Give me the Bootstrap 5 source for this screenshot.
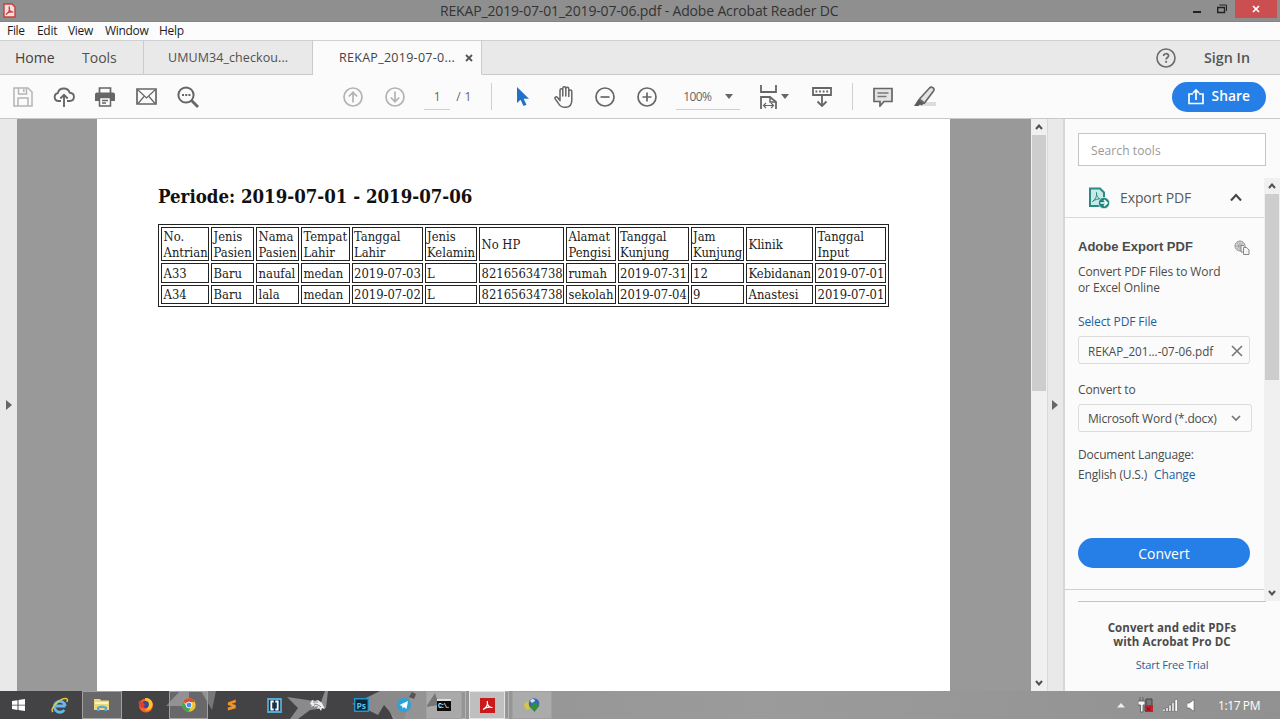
<!DOCTYPE html>
<html lang="en">
<head>
<meta charset="utf-8">
<meta name="viewport" content="width=device-width, initial-scale=1">
<title>REKAP_2019-07-01_2019-07-06.pdf - Adobe Acrobat Reader DC</title>
<link href="https://cdn.jsdelivr.net/npm/bootstrap@5.3.0/dist/css/bootstrap.min.css" rel="stylesheet">
<style>
body{font-family:"Open Sans","Noto Sans",sans-serif;font-size:12px;line-height:16px;color:#4b4b4b;background:#fbfbfb;width:1280px;height:719px;overflow:hidden}
svg{display:block;flex:none}
.titlebar{height:22px;background:#8f8f8f;color:#333;border-bottom:1px solid #858585}
.titlebar>*{flex:none}
.titlebar .app-icon{margin-left:3px;width:13px}
.titlebar .caption{margin-left:424px;width:402px;font-size:14px;letter-spacing:-.16px;white-space:nowrap}
.titlebar .ctl-min{margin-left:351px}
.titlebar .ctl-max{margin-left:16px;margin-bottom:3px}
.titlebar .ctl-close{margin-left:8px;width:42px;height:18px;background:#cb4f50;align-self:flex-start}
.menubar{height:19px;border-bottom:1px solid #d0d0d0;color:#1c1c1c;padding-left:7px;font-size:12px;letter-spacing:-.3px;background:#fcfcfc}
.menubar span:nth-child(1){width:30px}.menubar span:nth-child(2){width:31px}.menubar span:nth-child(3){width:37px}.menubar span:nth-child(4){width:54px}
.tabbar{height:34px;background:#e9e9e9;font-size:14px;color:#505050}
.tabbar>div{border-bottom:1px solid #c9c9c9}
.tab-main{width:144px;border-right:1px solid #cbcbcb;padding-left:15px}
.tab-main span:first-child{width:67px;color:#3f3f3f}
.tab-doc{width:169px;border-right:1px solid #cbcbcb;padding:1px 0 0 24px;font-size:12.5px;letter-spacing:.08px;white-space:nowrap}
.tab-doc.current{background:#fbfbfb;border-bottom-color:#fbfbfb!important;padding-left:26px;color:#444;letter-spacing:.28px}
.signin{font-size:14.3px;font-weight:600;color:#555;width:76px;margin-left:28px}
.toolbar{height:44px;border-bottom:1px solid #c9c9c9;background:#fbfbfb;color:#666}
.cell{width:41.25px;display:flex;justify-content:center;flex:none}
.grp-file{margin-left:2px}.grp-page{margin-left:124.5px}.grp-nav{margin-left:10px}
.page-no{width:26px;height:26px;border-bottom:1px solid #d0d0d0;text-align:center;margin-left:9px;line-height:25px}
.page-sum{width:41px;padding-left:6px;letter-spacing:.4px}
.rule{width:1px;height:27px;background:#cfcfcf}
.rule-edit{margin-left:20px}
.zoom-box{width:64px;height:26px;border-bottom:1px solid #d0d0d0;margin-left:9px;padding:1px 7px 0;font-size:12px;letter-spacing:-.6px}
.caret{width:0;height:0;border:4px solid transparent;border-top:5px solid #666;border-bottom:0}
.ic-fit{margin-left:20px}.ic-keys{margin-left:23px}.ic-note{margin-left:20px}.ic-pen{margin-left:21px}
.btn-share{width:94px;height:30px;background:#267fe6;color:#fff;font-size:13.8px;font-weight:600;margin-left:235.5px}
.work{height:572px}
.strip{background:#e9e9e9;width:17px}
.strip.right-strip{border-left:1px solid #d9d9d9;border-right:2px solid #d6d6d6;width:18px;padding-right:2px}
.canvas-area{background:#999;width:1014px}
.sheet{margin-left:80px;width:853px;background:#fff;padding:67px 0 0 61px;color:#000;font-family:"DejaVu Serif Condensed","DejaVu Serif",serif;font-stretch:condensed}
.sheet h1{font:inherit;font-weight:700;font-size:18.5px;line-height:22px;margin:0 0 16px;color:#111}
.grid-tbl{table-layout:fixed;width:731px;border:1px solid #222;border-collapse:separate;border-spacing:2px;font-size:12.9px;line-height:16px;color:#222}
.grid-tbl td{border:1px solid #222;padding:1px 0 0 1.500px;height:20px;white-space:nowrap}
.grid-tbl tr:first-child td{height:34px;line-height:15.500px}
.grid-tbl tr:last-child td{height:19px}
.vscroll{width:16px;background:#f0f0f0}
.vscroll .thumb{background:#cdcdcd;width:14px}
.vscroll .arr{height:16px;width:16px;display:flex;align-items:center;justify-content:center}
.side{width:215px}
.search-box{margin:14px 0 12px 13px;width:188px;height:33px;border:1px solid #c6c6c6;background:#fff;color:#999;padding-left:12px;line-height:33px;letter-spacing:.1px}
.side-main{width:199px;height:412px;border-bottom:1px solid #d0d0d0}
.exp-head{height:40px;border-bottom:1px solid #d9d9d9;padding-left:23px;font-size:14px;color:#5a5a5a}
.side-in{padding-left:13px}
.exp-title{margin-top:19px;font:bold 13px/20px "Liberation Sans",Arial,sans-serif;width:172px}
.lnk{color:#1f5f9e}
.field{width:172px;height:28px;border:1px solid #dcdcdc;border-radius:3px;padding:1px 6px 0 9px;margin-top:6px}
.btn-convert{width:172px;height:30px;background:#267fe6;color:#fff;font-size:14px;margin-top:53px}
.promo{margin:0 14px 0 13px;width:188px;text-align:center;border-top:1px solid #c4c4c4;padding-top:19px}
.promo b{font-size:11.5px;line-height:14px;font-weight:700;letter-spacing:.1px}
.exp-name{margin-left:9px;letter-spacing:-.1px;padding-top:1px}
.exp-chev{margin-right:22px}
.exp-copy{letter-spacing:-.12px;margin-top:7px}
.pick{margin-top:18px;letter-spacing:-.1px}
.fname{font-size:11.7px;letter-spacing:0}
.field.wide{width:174px}
.fmt{letter-spacing:-.2px;padding-top:1px}
.lang{margin-top:13px;line-height:20px;letter-spacing:-.17px}
.side-scroll{height:423px}
.trial{display:block;margin-top:8px;font-size:11px;letter-spacing:-.15px}
.taskbar{height:28px;background:linear-gradient(90deg,#949494 0 430px,#9b9b9b 760px,#919191);position:relative}
.taskbar .wallpaper{position:absolute;left:0;top:0}
.slots{position:relative;height:28px}
.slot{width:43px;height:28px;display:flex;align-items:center;justify-content:center;flex:none}
.slot.open{border:1px solid #a0a0a0;background:rgba(255,255,255,.2)}
.slot.stack{width:36px}
.slot.stack.active{background:rgba(255,255,255,.4);border-color:#e4e4e4}
.slot.w37{width:37px}.slot.w39{width:39px}.slot.w40{width:40px}.slot.w42{width:42px}.slot.w44{width:44px}.slot.w45{width:45px}.slot.w46{width:46px}.slot.w47{width:47px}
.pile{width:4px;height:28px;border:1px solid #b4b4b4;border-left:0;margin-right:3px}
.tray{gap:9px}
.clock{color:#fff;font-size:12px;letter-spacing:-.4px;width:62px;margin-left:14px;padding-top:1px}
</style>
</head>
<body class="d-flex flex-column">

<header class="titlebar d-flex align-items-center flex-shrink-0">
  <svg class="app-icon" width="13" height="15" viewBox="0 0 13 15"><path d="M1 1h8l3 3v10H1z" fill="#f3dedd" stroke="#c4403e" stroke-width="1.4"/><path d="M3 11.500c3-2 4-5 3.200-8C5.500 7 7.500 9.300 10.300 9 7.500 8.600 4.500 9.500 3 11.500z" fill="none" stroke="#c4403e" stroke-width="1.200"/></svg>
  <div class="caption">REKAP_2019-07-01_2019-07-06.pdf - Adobe Acrobat Reader DC</div>
  <svg class="ctl-min" width="8" height="10"><path d="M0 6h8" stroke="#222" stroke-width="2"/></svg>
  <svg class="ctl-max" width="10" height="10" viewBox="0 0 10 10" fill="none" stroke="#222"><path d="M.7 3.500h6.800v5H.7z" stroke-width="1.400"/><path d="M2.500 1h7v6"/></svg>
  <div class="ctl-close d-flex align-items-center justify-content-center"><svg width="8" height="8"><path d="M1 1l6 6M7 1L1 7" stroke="#fff" stroke-width="1.700"/></svg></div>
</header>

<nav class="menubar d-flex align-items-center flex-shrink-0"><span>File</span><span>Edit</span><span>View</span><span>Window</span><span>Help</span></nav>

<div class="tabbar d-flex flex-shrink-0">
  <div class="tab-main d-flex align-items-center"><span>Home</span><span>Tools</span></div>
  <div class="tab-doc d-flex align-items-center">UMUM34_checkou...</div>
  <div class="tab-doc current d-flex align-items-center"><span>REKAP_2019-07-0...</span><svg class="ms-auto me-2" width="8" height="8"><path d="M1 1l6 6M7 1L1 7" stroke="#555" stroke-width="1.800"/></svg></div>
  <div class="flex-grow-1 d-flex align-items-center justify-content-end">
    <svg width="20" height="20" viewBox="0 0 20 20"><circle cx="10" cy="10" r="9" fill="none" stroke="#6b6b6b" stroke-width="1.600"/><path d="M7.600 8c0-3 5-3 5-.2 0 1.800-2.500 1.700-2.500 3.700" fill="none" stroke="#6b6b6b" stroke-width="1.700"/><circle cx="10.100" cy="13.800" r="1.100" fill="#6b6b6b"/></svg>
    <span class="signin">Sign In</span>
  </div>
</div>

<div class="toolbar d-flex align-items-center flex-shrink-0">
  <div class="grp-file d-flex align-items-center">
    <span class="cell"><svg width="20" height="20" viewBox="0 0 20 20" fill="none" stroke="#b5b5b5" stroke-width="1.500"><path d="M1 1h14l4 4v14H1zM5.500 1v6h8V1M10.800 2v3M5 19v-8h10v8"/></svg></span>
    <span class="cell"><svg width="22" height="20" viewBox="0 0 22 20" fill="none" stroke="#686868" stroke-width="1.900"><path d="M8 14H5.500a4 4 0 0 1-.7-7.900C5.500 3 8 1.500 10.800 1.500c3 0 5.200 1.700 5.900 4.200 6 .5 5.300 8.300 0 8.300H14"/><path d="M11 20V8M7.300 11.500L11 7.800l3.700 3.700"/></svg></span>
    <span class="cell"><svg width="20" height="20" viewBox="0 0 20 20"><path d="M4.500 6V1h11v5" fill="none" stroke="#666" stroke-width="1.700"/><path d="M2 5.500h16a2 2 0 0 1 2 2V14h-4v-3.500H4V14H0V7.500a2 2 0 0 1 2-2z" fill="#666"/><path d="M4.500 10.500h11V19h-11zM7 13.500h6M7 16h4" fill="none" stroke="#666" stroke-width="1.500"/></svg></span>
    <span class="cell"><svg width="21" height="17" viewBox="0 0 21 17" fill="none" stroke="#666" stroke-width="1.700"><path d="M1 1h19v15H1z"/><path d="M2 2l8.500 8L19 2M2 15.500l6-7M19 15.500l-6-7" stroke-width="1.200"/></svg></span>
    <span class="cell"><svg width="22" height="22" viewBox="0 0 22 22"><circle cx="9" cy="9" r="7.600" fill="none" stroke="#666" stroke-width="2"/><path d="M14.500 14.500l6.500 6.500" stroke="#666" stroke-width="2.800"/><path d="M5 9h8.500" stroke="#666" stroke-width="2" stroke-dasharray="2 1.200"/></svg></span>
  </div>
  <div class="grp-page d-flex align-items-center">
    <span class="cell"><svg width="20" height="20" viewBox="0 0 20 20" fill="none" stroke="#b3b3b3" stroke-width="1.700"><circle cx="10" cy="10" r="9"/><path d="M10 15.500V5.500M5.800 9.500L10 5.300l4.200 4.200"/></svg></span>
    <span class="cell"><svg width="20" height="20" viewBox="0 0 20 20" fill="none" stroke="#b3b3b3" stroke-width="1.700"><circle cx="10" cy="10" r="9"/><path d="M10 4.500v10M5.800 10.500l4.200 4.200 4.200-4.200"/></svg></span>
    <span class="page-no">1</span><span class="page-sum">/ 1</span>
    <span class="rule"></span>
  </div>
  <div class="grp-nav d-flex align-items-center">
    <span class="cell"><svg width="12" height="20" viewBox="0 0 12 20"><path d="M0 0v16l3.500-3.200L6.500 19l3-1.300-2.900-6H12z" fill="#2271c8"/></svg></span>
    <span class="cell"><svg width="21" height="22" viewBox="0 0 21 22" fill="none" stroke="#666" stroke-width="1.500" stroke-linejoin="round" stroke-linecap="round"><path d="M6 11V4.200c0-2 2.800-2 2.800 0V10 2.500c0-2.300 3-2.300 3 0V10 3c0-2.200 3-2.200 3 0v7.500V5.500c0-2 3-2 3 0V14c0 4.500-2.400 7.300-6.600 7.300-3.800 0-5.700-1.600-7-4.300L1 12.600c-.5-1.700 1.500-2.400 2.500-1L6 14.600V11"/></svg></span>
    <span class="cell"><svg width="20" height="20" viewBox="0 0 20 20" fill="none" stroke="#666" stroke-width="1.700"><circle cx="10" cy="10" r="9"/><path d="M5.500 10h9"/></svg></span>
    <span class="cell"><svg width="20" height="20" viewBox="0 0 20 20" fill="none" stroke="#666" stroke-width="1.700"><circle cx="10" cy="10" r="9"/><path d="M5.500 10h9M10 5.500v9"/></svg></span>
  </div>
  <div class="zoom-box d-flex align-items-center justify-content-between"><span>100%</span><span class="caret"></span></div>
  <svg class="ic-fit" width="17" height="24" viewBox="0 0 17 24" fill="none" stroke="#666" stroke-width="1.800"><path d="M1 0v7h15V0M1 24V12h9l6 5v7"/><path d="M10 12v5h6" stroke-width="1.500"/><path d="M3.500 20.500h10M6 18l-2.500 2.500L6 23M11 18l2.500 2.500L11 23" stroke-width="1.200"/></svg>
  <span class="caret ms-1"></span>
  <svg class="ic-keys" width="20" height="20" viewBox="0 0 20 20" fill="none" stroke="#666"><path d="M1 1h18v7H1z" stroke-width="1.800"/><path d="M3.500 4.500H17" stroke-width="2" stroke-dasharray="1.800 1.800"/><path d="M10 9v9.500M5.500 14.500L10 19l4.500-4.500" stroke-width="1.800"/></svg>
  <span class="rule rule-edit"></span>
  <svg class="ic-note" width="20" height="20" viewBox="0 0 20 20"><path d="M1 1.500h18v13h-8L7 19v-4.500H1z" fill="#e3e3e3" stroke="#666" stroke-width="1.700"/><path d="M4.500 6h11M4.500 9.500h9" stroke="#777" stroke-width="1.300"/></svg>
  <svg class="ic-pen" width="22" height="21" viewBox="0 0 22 21"><path d="M8 16h14v4H5z" fill="#dcdcdc"/><path d="M5.500 13L15.500 2c2-2 5.800.3 4 3L10.500 17z" fill="#e2e2e2" stroke="#666" stroke-width="1.600"/><path d="M4.500 13l5.800 4.500-3 2-1.300-1L4.500 20H0z" fill="#5c5c5c"/></svg>
  <button class="btn-share btn rounded-pill border-0 p-0 d-flex align-items-center justify-content-center"><svg class="me-2" width="16" height="16" viewBox="0 0 16 16" fill="none" stroke="#fff" stroke-width="1.700"><path d="M5 5H1v9.500h14V5h-4M8 11V1.500M5 4l3-3 3 3"/></svg>Share</button>
</div>

<main class="work d-flex flex-shrink-0">
  <div class="strip d-flex align-items-center justify-content-center"><svg width="6" height="10"><path d="M0 0l6 5-6 5z" fill="#666"/></svg></div>
  <div class="canvas-area d-flex">
    <article class="sheet">
      <h1>Periode: 2019-07-01 - 2019-07-06</h1>
      <table class="grid-tbl">
        <colgroup><col style="width:48px"><col style="width:43px"><col style="width:43px"><col style="width:48.5px"><col style="width:71px"><col style="width:52.5px"><col style="width:85px"><col style="width:49.5px"><col style="width:71px"><col style="width:53.5px"><col style="width:67px"><col style="width:71px"></colgroup>
        <tr><td>No.<br>Antrian</td><td>Jenis<br>Pasien</td><td>Nama<br>Pasien</td><td>Tempat<br>Lahir</td><td>Tanggal<br>Lahir</td><td>Jenis<br>Kelamin</td><td>No HP</td><td>Alamat<br>Pengisi</td><td>Tanggal<br>Kunjung</td><td>Jam<br>Kunjung</td><td>Klinik</td><td>Tanggal<br>Input</td></tr>
        <tr><td>A33</td><td>Baru</td><td>naufal</td><td>medan</td><td>2019-07-03</td><td>L</td><td>82165634738</td><td>rumah</td><td>2019-07-31</td><td>12</td><td>Kebidanan</td><td>2019-07-01</td></tr>
        <tr><td>A34</td><td>Baru</td><td>lala</td><td>medan</td><td>2019-07-02</td><td>L</td><td>82165634738</td><td>sekolah</td><td>2019-07-04</td><td>9</td><td>Anastesi</td><td>2019-07-01</td></tr>
      </table>
    </article>
  </div>
  <div class="vscroll d-flex flex-column align-items-center">
    <span class="arr"><svg width="8" height="6"><path d="M1 5l3-3.500L7 5" fill="none" stroke="#505050" stroke-width="2"/></svg></span>
    <span class="thumb" style="height:256px"></span>
    <span class="arr mt-auto"><svg width="8" height="6"><path d="M1 1l3 3.500L7 1" fill="none" stroke="#505050" stroke-width="2"/></svg></span>
  </div>
  <div class="strip right-strip d-flex align-items-center justify-content-center"><svg width="6" height="10"><path d="M0 0l6 5-6 5z" fill="#666"/></svg></div>

  <aside class="side">
    <div class="search-box">Search tools</div>
    <div class="d-flex">
      <section class="side-main">
        <div class="exp-head d-flex align-items-center">
          <svg width="23" height="22" viewBox="0 0 23 22"><path d="M2 1.500h10l4 4V19H2z" fill="#c6eae6" stroke="#2b8a83" stroke-width="2"/><path d="M4.500 14.500c3-2 4.500-5 4-9 0 4 2 7 5.500 6.500-4-.5-7 .5-9.500 2.500z" fill="none" stroke="#2b8a83"/><circle cx="16" cy="16" r="5.600" fill="#1f857c" stroke="#d4efec" stroke-width=".8"/><path d="M12.500 16h6M16 13l3 3-3 3" fill="none" stroke="#fff" stroke-width="1.700"/></svg>
          <span class="exp-name">Export PDF</span>
          <svg class="ms-auto exp-chev" width="12" height="9"><path d="M1 7.500l5-5.500 5 5.500" fill="none" stroke="#444" stroke-width="2"/></svg>
        </div>
        <div class="side-in">
          <div class="exp-title d-flex align-items-center justify-content-between"><span>Adobe Export PDF</span><svg width="16" height="15" viewBox="0 0 16 15"><circle cx="6" cy="6" r="5" fill="#d8d8d8" stroke="#999"/><path d="M1 6h10M6 1v10M3 2.500c2 2 2 5 0 7M9 2.500c-2 2-2 5 0 7" fill="none" stroke="#999" stroke-width=".8"/><path d="M7 5.500h3l2 2V12H7z" fill="#f4f4f4" stroke="#888"/><path d="M9.500 7.500h3.200L15 10v4.500H9.500z" fill="#f4f4f4" stroke="#888"/></svg></div>
          <div class="exp-copy">Convert PDF Files to Word<br>or Excel Online</div>
          <div class="lnk pick">Select PDF File</div>
          <div class="field d-flex align-items-center justify-content-between"><span class="fname">REKAP_201...-07-06.pdf</span><svg width="12" height="12"><path d="M1 1l10 10M11 1L1 11" stroke="#777" stroke-width="1.600"/></svg></div>
          <div class="pick">Convert to</div>
          <div class="field wide d-flex align-items-center justify-content-between"><span class="fmt">Microsoft Word (*.docx)</span><svg class="me-1" width="10" height="7"><path d="M1 1l4 4 4-4" fill="none" stroke="#777" stroke-width="1.700"/></svg></div>
          <div class="lang">Document Language:<br>English (U.S.) <span class="lnk ms-1">Change</span></div>
          <button class="btn-convert btn rounded-pill border-0 p-0 d-block">Convert</button>
        </div>
      </section>
      <div class="vscroll side-scroll d-flex flex-column align-items-center">
        <span class="arr"><svg width="8" height="6"><path d="M1 5l3-3.500L7 5" fill="none" stroke="#505050" stroke-width="2"/></svg></span>
        <span class="thumb" style="height:186px"></span>
        <span class="arr mt-auto"><svg width="8" height="6"><path d="M1 1l3 3.500L7 1" fill="none" stroke="#505050" stroke-width="2"/></svg></span>
      </div>
    </div>
    <div class="promo"><b class="d-block">Convert and edit PDFs<br>with Acrobat Pro DC</b><span class="lnk trial">Start Free Trial</span></div>
  </aside>
</main>

<footer class="taskbar flex-shrink-0">
  <svg class="wallpaper" width="560" height="28">
    <path d="M0 0H410L398 8 387 14 393 28H0z" fill="#434346"/>
    <path d="M166 15L180 0h9v15zM201 0h15l-4 19z" fill="#77777a"/>
    <path d="M287 6l34 5 4-11 3 0-2 17-16 2-12 9h-8l8-11zM352 13l18-8 10-5h32l-8 28h-8l-12-14-6 10-12-6z" fill="#8a8a8a"/>
    <path d="M412 1l4 2-2 5-5-2zM435 2l4 12-13 2z" fill="#545456"/>
  </svg>
  <div class="slots d-flex align-items-center">
    <span class="slot w37"><svg width="13" height="12"><path d="M0 2l5.500-.8v4.500H0zM6.500 1L13 0v5.700H6.500zM0 6.500h5.500v4.400L0 10zM6.500 6.500H13V12l-6.500-1z" fill="#fff"/></svg></span>
    <span class="slot w45"><svg width="18" height="17" viewBox="0 0 18 17"><path d="M14.500 9H5M14.300 9a5.500 5.500 0 1 0-1 4" fill="none" stroke="#64b8ea" stroke-width="2.800"/><path d="M2 15C-2 12 9 1 15 1.500c2 .3 1.500 2 .8 3.500" fill="none" stroke="#e8c640" stroke-width="1.500"/></svg></span>
    <span class="slot open w40"><svg width="16" height="14" viewBox="0 0 16 14"><path d="M0 1h6l1 1.500h8V12H0z" fill="#ecd77c"/><path d="M1 4h13v2H1z" fill="#fff2b8"/><path d="M3 13V9q5-3 10 0v4h-2.500v-3h-5v3z" fill="#5ba9d3"/></svg></span>
    <span class="slot w47"><svg width="16" height="16" viewBox="0 0 16 16"><circle cx="8" cy="8.500" r="7" fill="#f0642a"/><path d="M7 1c6-1 9 5 7 9s-6 4-7 3c4-1 4-5 1-7z" fill="#fbc52d"/><circle cx="7.500" cy="7.500" r="3.400" fill="#38479c"/><path d="M1 4c2 0 5 2 6 4l-3 3C1 10 0 7 1 4z" fill="#e33e2d"/></svg></span>
    <span class="slot open w39"><svg width="14" height="14" viewBox="0 0 14 14"><circle cx="7" cy="7" r="6.700" fill="#f2c530"/><path d="M7 7L1 3.800A6.700 6.700 0 0 1 13 4H7z" fill="#dd4b3e"/><path d="M1 3.800A6.700 6.700 0 0 0 6.500 13.700L9 9 5 9z" fill="#3ea55b"/><circle cx="7" cy="7" r="2.900" fill="#4a8af0" stroke="#fff" stroke-width=".9"/></svg></span>
    <span class="slot w47"><svg width="10" height="12" viewBox="0 0 12 13"><path d="M1 3.500L10.500 0v3.500L5.500 5l5 1.500v4L1 13V9.500l5-1.500-5-1.500z" fill="#f0932b"/></svg></span>
    <span class="slot w39"><svg width="15" height="15" viewBox="0 0 15 15"><path d="M1 1h13v13H1z" fill="#17324a" stroke="#57a9d6" stroke-width="1.800"/><path d="M6.700 3.500H4.300v8h2.400M8.300 3.500h2.400v8H8.300" fill="none" stroke="#fff" stroke-width="1.800"/></svg></span>
    <span class="slot w46"><svg width="15" height="12" viewBox="0 0 15 12"><path d="M0 5l2-4 3 1 3-1 4 3 3 6-3-1-1 3-2-3-2 1 1-3-4 1 1-2-4 2 1-2z" fill="#eee"/><path d="M4 5l4 1 3 2M3 3h5" stroke="#888" fill="none"/></svg></span>
    <span class="slot w42"><svg width="15" height="14"><path d="M.7.700h13.600v12.600H.7z" fill="#0c2638" stroke="#2594c8" stroke-width="1.400"/><text x="2.500" y="10.500" font-size="8.500" font-weight="700" fill="#58c0ee" font-family="Open Sans, sans-serif">Ps</text></svg></span>
    <span class="slot w44"><svg width="14" height="14"><circle cx="7" cy="7" r="7" fill="#2ba2dc"/><path d="M2.500 7l8.500-4-1.500 8-2.500-2-1.500 1.500-.3-2.500z" fill="#fff"/></svg></span>
    <span class="slot open stack"><svg width="14" height="12"><path d="M0 0h14v12H0z" fill="#0b0b0b"/><path d="M0 0h14v2H0z" fill="#ddd"/><text x="1" y="9" font-size="6.500" font-weight="700" fill="#eee" font-family="Liberation Mono, monospace" textLength="12">C:\.</text></svg></span><span class="pile"></span>
    <span class="slot open stack active"><svg width="15" height="15" viewBox="0 0 15 15"><path d="M0 0h15v15H0z" fill="#c8191c"/><path d="M3 11.500c3-1.500 5-4.500 4.300-8.500C7 7 9 9.800 12.500 9.500 9 8.700 5.500 9.500 3 11.500z" fill="none" stroke="#fff" stroke-width="1.200"/></svg></span><span class="pile"></span>
    <span class="slot open w40"><svg width="16" height="14" viewBox="0 0 16 14"><path d="M0 8c0-3 3-5 6-4l2 5-5 3z" fill="#d5c648"/><circle cx="10" cy="5.500" r="5.300" fill="#3469b2"/><path d="M6 3c2-3 5-2 5 0L8 5z" fill="#cfe0ea"/><path d="M6.500 7H9V5h4v2.500h2.500L10.500 14 5 8z" fill="#358f36"/></svg></span>
    <div class="tray d-flex align-items-center ms-auto">
      <svg width="8" height="5"><path d="M0 4.500L4 0l4 4.500z" fill="#eee"/></svg>
      <svg class="ms-1" width="16" height="16" viewBox="0 0 16 16"><path d="M2 0v4M5 0v4M0 4h7v4H5v7H2.500V8H0z" stroke="#555" stroke-width=".8" fill="#f4f4f4"/><path d="M8 2h6v12H7V9h1z" fill="#777" stroke="#444"/><path d="M7 8h8v7H7z" fill="#c3202a"/><path d="M8.500 10l4 4M12.500 10l-4 4" stroke="#651018"/></svg>
      <svg width="15" height="13" viewBox="0 0 15 13" fill="#fff" stroke="#555" stroke-width=".5"><path d="M0 10h2v2.500H0zM3 8.500h2v4H3zM6 6h2v6.500H6zM9 3.500h2v9H9zM12 .5h2.500v12H12z"/></svg>
      <svg width="8" height="13" viewBox="0 0 8 13"><path d="M0 4h2.500L7 .5v12L2.500 9H0z" fill="#fff" stroke="#555" stroke-width=".6"/></svg>
      <span class="clock">1:17 PM</span>
    </div>
  </div>
</footer>
<script src="https://cdn.jsdelivr.net/npm/bootstrap@5.3.0/dist/js/bootstrap.bundle.min.js"></script>
</body>
</html>
